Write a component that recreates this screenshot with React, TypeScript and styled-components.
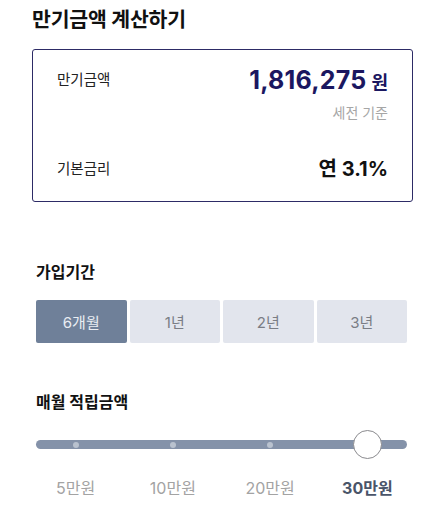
import styled, { createGlobalStyle } from 'styled-components';

const GlobalStyle = createGlobalStyle`
  body {
    margin: 0;
    background: #ffffff;
    font-family: Inter, "Noto Sans CJK KR", "Noto Sans", sans-serif;
    color: #111111;
  }
`;

const periods = ['6개월', '1년', '2년', '3년'];
const amounts = ['5만원', '10만원', '20만원', '30만원'];

const App = () => {
  const periodIndex = 0;
  const amountIndex = 3;

  return (
    <>
      <GlobalStyle />
      <StyledPage>
        <h1 className="title">만기금액 계산하기</h1>

        <ResultCard>
          <div className="result-row">
            <span className="result-label">만기금액</span>
            <div className="result-value">
              <span className="amount">
                1,816,275<small>원</small>
              </span>
              <span className="note">세전 기준</span>
            </div>
          </div>
          <div className="result-row rate">
            <span className="result-label">기본금리</span>
            <span className="rate-value">연 3.1%</span>
          </div>
        </ResultCard>

        <Section $top={58}>
          <h2 className="section-title">가입기간</h2>
          <Tabs>
            {periods.map((p, i) => (
              <Tab key={p} $active={i === periodIndex}>
                {p}
              </Tab>
            ))}
          </Tabs>
        </Section>

        <Section $top={47}>
          <h2 className="section-title">매월 적립금액</h2>
          <Slider>
            {amounts.map((a, i) => (
              <Stop key={a}>{i === amountIndex ? <Thumb /> : <Dot />}</Stop>
            ))}
          </Slider>
          <Labels>
            {amounts.map((a, i) => (
              <Label key={a} $active={i === amountIndex}>
                {a}
              </Label>
            ))}
          </Labels>
        </Section>
      </StyledPage>
    </>
  );
};

const StyledPage = styled.div`
  width: 444px;
  padding: 6px 31px 20px 32px;
  box-sizing: border-box;

  .title {
    margin: 0 0 15px;
    font-size: 20.5px;
    line-height: 28px;
    font-weight: 700;
    letter-spacing: -0.2px;
    color: #111111;
  }
`;

const ResultCard = styled.div`
  border: 1.5px solid #2d2b66;
  border-radius: 3px;
  padding: 13px 24px 17px 24px;

  .result-row {
    display: flex;
    justify-content: space-between;
    align-items: flex-start;
  }

  .result-label {
    font-size: 14.5px;
    line-height: 33px;
    color: #222222;
  }

  .result-value {
    display: flex;
    flex-direction: column;
    align-items: flex-end;
  }

  .amount {
    font-size: 25px;
    line-height: 34px;
    font-weight: 700;
    color: #1b1760;
    letter-spacing: 0.2px;

    small {
      font-size: 18px;
      margin-left: 5px;
      letter-spacing: 0;
    }
  }

  .note {
    margin-top: 3px;
    font-size: 14px;
    line-height: 20px;
    color: #a6a6a6;
  }

  .rate {
    margin-top: 31px;
    align-items: center;
  }

  .rate .result-label {
    line-height: 30px;
  }

  .rate-value {
    font-size: 20px;
    line-height: 30px;
    font-weight: 700;
    color: #111111;
  }
`;

const Section = styled.section<{ $top: number }>`
  margin-top: ${(p) => p.$top}px;
  padding: 0 6px 0 4px;

  .section-title {
    margin: 0 0 16px;
    font-size: 16px;
    line-height: 24px;
    font-weight: 700;
    color: #111111;
  }
`;

const Tabs = styled.div`
  display: grid;
  grid-template-columns: repeat(4, 1fr);
  gap: 3px;
`;

const Tab = styled.button<{ $active: boolean }>`
  height: 43px;
  border: none;
  border-radius: 2px;
  font-family: inherit;
  font-size: 15px;
  background: ${(p) => (p.$active ? '#6f8099' : '#e2e5ed')};
  color: ${(p) => (p.$active ? '#e9edf3' : '#7a7d85')};
  cursor: pointer;
`;

const Slider = styled.div`
  position: relative;
  display: grid;
  grid-template-columns: repeat(4, 1fr);
  height: 28px;
  margin: 0 -9px;

  &::before {
    content: '';
    position: absolute;
    left: 9px;
    right: 9px;
    top: 10px;
    height: 9px;
    border-radius: 5px;
    background: #8492a9;
  }
`;

const Stop = styled.div`
  position: relative;
  display: flex;
  align-items: center;
  justify-content: center;
`;

const Dot = styled.span`
  width: 6px;
  height: 6px;
  border-radius: 50%;
  background: #b9c2cf;
`;

const Thumb = styled.span`
  width: 27px;
  height: 27px;
  border-radius: 50%;
  background: #ffffff;
  border: 1px solid #8a8a8e;
`;

const Labels = styled.div`
  display: grid;
  grid-template-columns: repeat(4, 1fr);
  margin: 18px -9px 0;
`;

const Label = styled.span<{ $active: boolean }>`
  text-align: center;
  font-size: 16px;
  line-height: 24px;
  font-weight: ${(p) => (p.$active ? 700 : 400)};
  color: ${(p) => (p.$active ? '#4a5569' : '#a3a3a3')};
`;

export default App;
